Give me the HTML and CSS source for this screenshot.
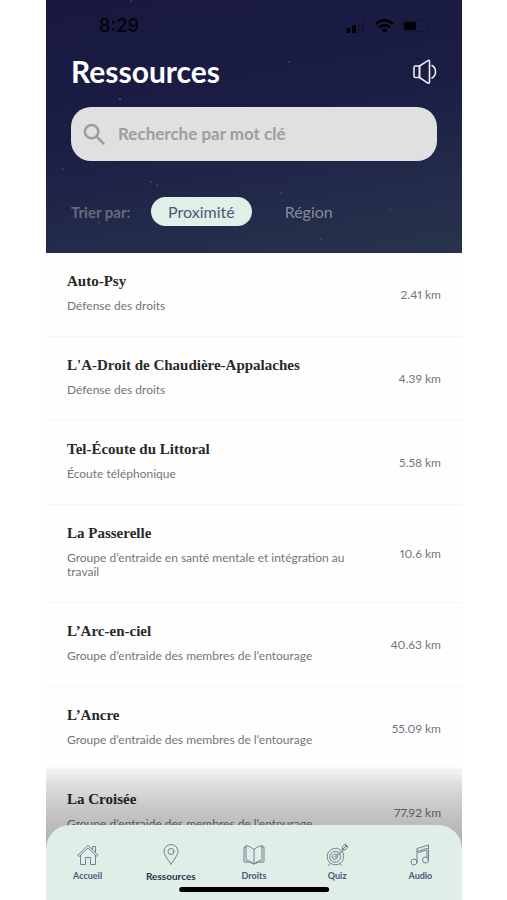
FILE: index.html
```html
<!DOCTYPE html>
<html lang="fr">
<head>
<meta charset="utf-8">
<meta name="viewport" content="width=device-width, initial-scale=1">
<title>Ressources</title>
<link rel="stylesheet" href="styles.css">
</head>
<body>
<div class="app">
  <header class="header">
    <svg class="stars" viewBox="0 0 416 253" preserveAspectRatio="none" aria-hidden="true">
      <g fill="#8b93b8">
        <circle cx="74" cy="99" r="1"/><circle cx="243" cy="62" r=".8"/><circle cx="105" cy="182" r=".8"/><circle cx="111" cy="185" r=".8"/><circle cx="235" cy="193" r=".8"/><circle cx="344" cy="210" r=".8"/><circle cx="275" cy="239" r=".8"/><circle cx="53" cy="223" r=".8"/><circle cx="17" cy="169" r=".8"/><circle cx="85" cy="1" r=".8"/>
      </g>
    </svg>
    <div class="status">
      <span class="clock">8:29</span>
      <svg class="status-icons" viewBox="0 0 86 16" aria-hidden="true">
        <rect x="1.500" y="10" width="4" height="5" rx="1"/>
        <rect x="7" y="7" width="4" height="8" rx="1"/>
        <g opacity=".2"><rect x="13" y="4" width="2" height="11" rx="1"/><rect x="17" y="2" width="2" height="13" rx="1"/></g>
        <g fill="none" stroke="#000" stroke-width="2.6"><path d="M31 6Q39.500-1.500 48 6"/><path d="M34 9.500Q39.500 4.800 45 9.500"/></g>
        <path d="M36.300 11.800Q39.500 9.100 42.700 11.800L39.500 15Z"/>
        <rect x="57.500" y="2.500" width="25" height="11" rx="3" fill="none" stroke="#000" opacity=".25"/>
        <rect x="59" y="4" width="12" height="8" rx="1.500"/>
        <path d="M84 6v4q1.500-2 0-4" opacity=".3"/>
      </svg>
    </div>
    <div class="title-bar">
      <h1 class="title">Ressources</h1>
      <button class="sound" type="button" aria-label="Écouter">
        <svg viewBox="0 0 24 26" fill="none" stroke="#e9ebf5" stroke-width="1.600" stroke-linejoin="round" stroke-linecap="round" aria-hidden="true">
          <path d="M6.500 7H2.500Q1 7 1 8.500v8.500Q1 18.500 2.500 18.500H6.500Z"/>
          <path d="M6.500 7L14.500 1.800Q16.500 .5 16.500 2.500V22.500Q16.500 25 14.500 23.800L6.500 18.500Z"/>
          <path d="M19 6.500Q22.500 8.500 22.500 12.800T19 19"/>
        </svg>
      </button>
    </div>
    <label class="search">
      <svg class="search-icon" viewBox="0 0 24 24" fill="none" stroke="#9c9c9c" stroke-width="2.600" aria-hidden="true"><circle cx="9" cy="9" r="7"/><path d="M13.800 13.800L22 22"/></svg>
      <input class="search-input" type="search" placeholder="Recherche par mot clé" aria-label="Recherche par mot clé">
    </label>
    <div class="sort">
      <span class="sort-label">Trier par:</span>
      <button class="chip chip-active" type="button">Proximité</button>
      <button class="chip" type="button">Région</button>
    </div>
  </header>
  <main class="content">
    <ul class="list">
      <li class="row"><div class="info"><h2 class="name">Auto-Psy</h2><p class="kind">Défense des droits</p></div><span class="distance">2.41 km</span></li>
      <li class="row"><div class="info"><h2 class="name">L'A-Droit de Chaudière-Appalaches</h2><p class="kind">Défense des droits</p></div><span class="distance">4.39 km</span></li>
      <li class="row"><div class="info"><h2 class="name">Tel-Écoute du Littoral</h2><p class="kind">Écoute téléphonique</p></div><span class="distance">5.58 km</span></li>
      <li class="row"><div class="info"><h2 class="name">La Passerelle</h2><p class="kind">Groupe d’entraide en santé mentale et intégration au travail</p></div><span class="distance">10.6 km</span></li>
      <li class="row"><div class="info"><h2 class="name">L’Arc-en-ciel</h2><p class="kind">Groupe d’entraide des membres de l’entourage</p></div><span class="distance">40.63 km</span></li>
      <li class="row"><div class="info"><h2 class="name">L’Ancre</h2><p class="kind">Groupe d’entraide des membres de l’entourage</p></div><span class="distance">55.09 km</span></li>
      <li class="row"><div class="info"><h2 class="name">La Croisée</h2><p class="kind">Groupe d’entraide des membres de l’entourage</p></div><span class="distance">77.92 km</span></li>
    </ul>
  </main>
  <div class="dock">
    <nav class="nav">
      <a class="tab" href="#accueil">
        <svg class="tab-icon" viewBox="0 0 24 24" aria-hidden="true"><path d="M2 12L12 2.500L22 12L20.500 13.200L12 5L3.500 13.200Z"/><path d="M4.500 12.500V21.500H9.500V14.500H14.500V21.500H19.500V12.500M16.500 6.500V3.500H19.500V9.500"/></svg>
        Accueil
      </a>
      <a class="tab tab-active" href="#ressources" aria-current="page">
        <svg class="tab-icon" viewBox="0 0 24 24" aria-hidden="true"><path d="M12 21Q5 12 5 8.500A7 7 0 0 1 19 8.500Q19 12 12 21Z"/><circle cx="12" cy="8.500" r="3"/></svg>
        Ressources
      </a>
      <a class="tab" href="#droits">
        <svg class="tab-icon" viewBox="0 0 24 24" aria-hidden="true"><path d="M12 6.500Q9 3.500 4 2.500V17Q9 18 12 21Q15 18 20 17V2.500Q15 3.500 12 6.500V21"/><path d="M4 4H2V19Q8 18.500 12 21Q16 18.500 22 19V4H20"/></svg>
        Droits
      </a>
      <a class="tab" href="#quiz">
        <svg class="tab-icon" viewBox="0 0 24 24" aria-hidden="true"><path d="M15 6.500A8.300 8.300 0 1 0 17.500 9M13 9A5.500 5.500 0 1 0 15 11M11.500 11.500A2.700 2.700 0 1 0 12.500 13"/><path d="M9.500 14L18 5.500M10.500 15L19 6.500M17.500 6.500V3.500L20.500 1V3.500H23L20.500 6.500ZM18 6L22 2M5 20.500L3.500 22.500M15 20.500L16.500 22.500"/></svg>
        Quiz
      </a>
      <a class="tab" href="#audio">
        <svg class="tab-icon" viewBox="0 0 24 24" aria-hidden="true"><path d="M9 19V5.500L20.500 2V17M10.500 9.500L19 7V14.800M9 8.500L20.500 5"/><circle cx="6" cy="19" r="3"/><circle cx="17.500" cy="17" r="3"/></svg>
        Audio
      </a>
    </nav>
    <div class="home-indicator"></div>
  </div>
</div>
</body>
</html>
```
FILE: styles.css
```css
* { box-sizing: border-box; }
body {
  margin: 0;
  padding: 0 45px 0 46px;
  background: #fff;
  font-family: Lato, "Liberation Sans", sans-serif;
}
h1, h2, p, ul { margin: 0; padding: 0; }
button { border: 0; padding: 0; background: none; font: inherit; }

.app {
  position: relative;
  display: flex;
  flex-direction: column;
  height: 100vh;
  overflow: hidden;
}

.header {
  position: relative;
  flex: none;
  padding: 16px 25px 27px;
  background: linear-gradient(170deg, #19193f 0%, #1b1d45 45%, #232c4a 78%, #28334d 100%);
}
.stars { position: absolute; inset: 0; width: 100%; height: 100%; opacity: .45; }

.status {
  display: flex;
  align-items: center;
  justify-content: space-between;
  height: 20px;
  padding: 0 6px 0 28px;
}
.clock { font: 600 18px/20px Inter, sans-serif; color: #05050f; }
.status-icons { width: 86px; height: 16px; }

.title-bar {
  display: flex;
  align-items: center;
  justify-content: space-between;
  margin: 17px 0 17px;
}
.title { font-size: 30px; line-height: 37px; font-weight: bold; color: #fff; }
.sound { width: 24px; height: 26px; }
.sound svg { display: block; }

.search {
  position: relative;
  display: flex;
  align-items: center;
  gap: 12px;
  height: 54px;
  padding: 0 12px;
  border-radius: 20px;
  background: #e0e0e0;
}
.search-icon { flex: none; width: 23px; height: 23px; }
.search-input {
  flex: 1;
  min-width: 0;
  border: 0;
  padding: 0;
  outline: 0;
  background: none;
  font: bold 17px/24px Lato, sans-serif;
  color: #555;
}
.search-input::placeholder { color: #9e9e9e; opacity: 1; }

.sort {
  position: relative;
  display: flex;
  align-items: center;
  margin-top: 36px;
}
.sort-label { width: 80px; font-size: 15px; line-height: 18px; font-weight: bold; color: #666c79; }
.chip {
  height: 29px;
  padding: 0 17px;
  border-radius: 15px;
  font-size: 16px;
  color: #858b99;
}
.chip + .chip { margin-left: 16px; }
.chip-active { background: #e0f0e9; color: #48597a; }

.content { flex: 1; min-height: 0; overflow: hidden; background: #fefefe; }
.list { list-style: none; }
.row {
  display: flex;
  align-items: center;
  justify-content: space-between;
  gap: 24px;
  padding: 18px 21px 19px;
  border-bottom: 1px solid #f5f5f5;
}
.info { max-width: 292px; padding-bottom: 4px; }
.name { font: bold 15px/20px "Liberation Serif", serif; color: #292929; }
.kind { margin-top: 8px; font-size: 12px; line-height: 14px; color: #757575; }
.distance {
  flex: none;
  font-size: 12px;
  line-height: 15px;
  font-variant-numeric: proportional-nums;
  color: #6f7782;
}

.dock {
  position: absolute;
  left: 0;
  right: 0;
  bottom: 0;
  padding-top: 58px;
  background: linear-gradient(rgb(0 0 0 / 2%) 0, rgb(0 0 0 / 12%) 16px, rgb(0 0 0 / 20%) 36px, rgb(0 0 0 / 32%) 80px);
}
.nav {
  display: grid;
  grid-template-columns: repeat(5, 1fr);
  height: 75px;
  padding-top: 18px;
  border-radius: 24px 24px 0 0;
  background: #e0eee8;
}
.tab {
  display: flex;
  flex-direction: column;
  align-items: center;
  gap: 3px;
  font-size: 9px;
  line-height: 12px;
  font-weight: bold;
  color: #47577a;
  text-decoration: none;
}
.tab-active { font-size: 10px; color: #27334c; }
.tab-icon {
  width: 24px;
  height: 24px;
  fill: none;
  stroke: #71838d;
  stroke-width: 1;
  stroke-linejoin: round;
  stroke-linecap: round;
}
.home-indicator {
  position: absolute;
  left: 50%;
  bottom: 8px;
  width: 36%;
  height: 5px;
  border-radius: 3px;
  background: #000;
  transform: translateX(-50%);
}
```
